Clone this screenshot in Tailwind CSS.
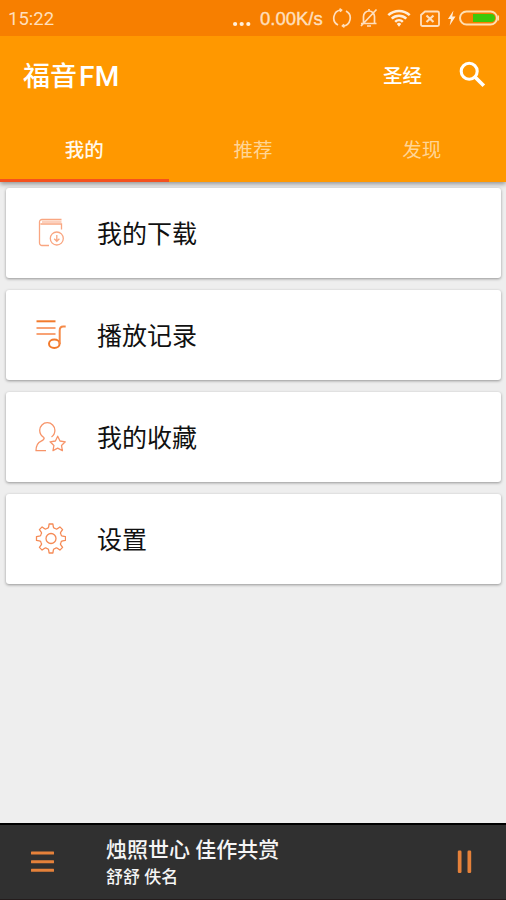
<!DOCTYPE html>
<html lang="zh-CN">
<head>
<meta charset="utf-8">
<title>福音FM</title>
<script src="https://cdn.jsdelivr.net/npm/@tailwindcss/browser@4"></script>
</head>
<body class="w-[506px] h-[900px] overflow-hidden bg-[#eeeeee] font-[Roboto,'Noto_Sans_CJK_SC',sans-serif] flex flex-col">
<header class="shrink-0 h-[182px] bg-[#ff9800] shadow-[0_2px_5px_rgba(0,0,0,0.4)] flex flex-col">
  <div class="h-9 shrink-0 bg-[#f77f00] flex items-center pl-2 pr-1.5 text-[#ffdfbd]">
    <span class="text-[18.5px] leading-9 pt-[2px]">15:22</span>
    <svg class="ml-auto mt-3 w-[18px] h-[6px]" viewBox="0 0 18 6" fill="#fff0dc"><circle cx="2.1" cy="3" r="2.1"/><circle cx="8.700" cy="3" r="2.1"/><circle cx="15.300" cy="3" r="2.1"/></svg>
    <span class="ml-[9px] w-[64px] whitespace-nowrap font-['Liberation_Sans',sans-serif] text-[18.5px] leading-9 pt-[2px] [-webkit-text-stroke:0.4px_#ffdfbd]">0.00K/s</span>
    <svg class="ml-2 w-5 h-5" viewBox="0 0 20 20" fill="none" stroke="currentColor" stroke-width="1.7"><path d="M9 2A8 8 0 0 0 6 17M11 18A8 8 0 0 0 14 3"/><path d="M7.500 0.700l2 1.400-1.500 1.700M12.500 19.300l-2-1.400 1.500-1.700"/></svg>
    <svg class="ml-[7px] w-5 h-5" viewBox="0 0 20 20" fill="none" stroke="currentColor" stroke-width="1.700"><path d="M2 15.500h15.500M4.500 15V8.500a5.500 5.500 0 0 1 11 0V15M8 18h4M10 1v2M2 18L17.500 1.500"/></svg>
    <svg class="ml-[8px] w-6 h-5" viewBox="0 0 24 20" fill="none" stroke="#ffeeda" stroke-width="2.500"><path d="M1.300 7.200a15.500 15.500 0 0 1 21.400 0M4.700 10.600a10.500 10.500 0 0 1 14.600 0M8.200 13.800a5.500 5.500 0 0 1 7.600 0"/><path d="M12 18.800l-2.200-2.800a3 3 0 0 1 4.400 0z" fill="#ffeeda" stroke="none"/></svg>
    <svg class="ml-[9px] mt-0.5 w-[22px] h-[18px]" viewBox="0 0 22 18" fill="none" stroke="currentColor" stroke-width="1.800"><path d="M5 1.500h12.500a1.500 1.500 0 0 1 1.500 1.500v11.500a1.500 1.500 0 0 1-1.500 1.500h-15a1.500 1.500 0 0 1-1.500-1.500V5z"/><path d="M6.500 5.500l7 6.500M13.500 5.500l-7 6.500" stroke-width="2.200"/></svg>
    <svg class="ml-[4px] mr-px w-[12px] h-4" viewBox="0 0 12 16" fill="#ffeeda"><path d="M7.500 0.500L2 9h3L3.700 15.500 9.500 6.500H6.200z"/></svg>
    <svg class="w-[41px] h-4" viewBox="0 0 41 16"><rect x="1" y="1.500" width="37" height="13" rx="6.500" fill="none" stroke="#ffdfb0" stroke-width="2"/><path d="M14 4H32a4 4 0 0 1 0 8H14z" fill="#3cc80a"/><path d="M39.300 5.500v5" stroke="#ffdfb0" stroke-width="1.500"/></svg>
  </div>
  <div class="h-20 shrink-0 flex items-center pl-[23px] pr-5 text-white">
    <h1 class="text-[27px] leading-10 font-medium pt-[2px]">福音<span class="text-[28px] tracking-[0.4px] ml-[2px]">FM</span></h1>
    <span class="ml-auto text-[19.500px] font-medium pt-[2px]">圣经</span>
    <svg class="ml-[37px] -mt-1 w-[27px] h-[27px]" viewBox="0 0 27 27" fill="none" stroke="white"><circle cx="10.200" cy="10.200" r="8" stroke-width="3.100"/><path d="M16 16l8.800 8.800" stroke-width="3.700"/></svg>
  </div>
  <nav class="h-[66px] shrink-0 grid grid-cols-3 text-center text-[19.500px] leading-[63px] text-[#ffd595]">
    <span class="h-[66px] pt-[3px] text-[#fff8ec] font-medium border-b-[3px] border-[#f4511e]">我的</span>
    <span class="pt-[3px]">推荐</span>
    <span class="pt-[3px]">发现</span>
  </nav>
</header>
<main class="grow flex flex-col gap-3 pt-[6px] pl-[6px] pr-[5px]">
  <section class="h-[90px] bg-white rounded-[3px] shadow-[0_1px_3px_rgba(0,0,0,0.38)] flex items-center pl-[28px]">
    <svg class="w-8 h-8" viewBox="0 0 32 32" fill="none" stroke="#f9a681" stroke-width="1.300"><path d="M27.500 2.500H8A2.500 2.500 0 0 0 5.500 5V26a2.500 2.500 0 0 0 2.500 2.500h7M6.500 7H27.500V12.500"/><path d="M8 4.800h19.500" stroke="#fcd0bd" stroke-width="2.500"/><circle cx="22.800" cy="21.500" r="6.500"/><path d="M22.800 18v6M20.200 21.700l2.600 2.600 2.600-2.600"/></svg>
    <span class="ml-[31px] pt-1 text-[25px] leading-8 text-[#111]">我的下载</span>
  </section>
  <section class="h-[90px] bg-white rounded-[3px] shadow-[0_1px_3px_rgba(0,0,0,0.38)] flex items-center pl-[28px]">
    <svg class="w-8 h-8" viewBox="0 0 32 32" fill="none" stroke="#f27a2c" stroke-width="2"><path d="M2.500 2.300h19"/><path d="M2.500 9h19M2.500 15h19" stroke="#f8a274"/><ellipse cx="20.300" cy="24.800" rx="5.300" ry="4.300"/><path d="M25.700 25V11.500c0-2.600 1.300-4 3.500-4h2.500" stroke="#f58a48"/></svg>
    <span class="ml-[31px] pt-1 text-[25px] leading-8 text-[#111]">播放记录</span>
  </section>
  <section class="h-[90px] bg-white rounded-[3px] shadow-[0_1px_3px_rgba(0,0,0,0.38)] flex items-center pl-[28px]">
    <svg class="w-8 h-8" viewBox="0 0 32 32" fill="none" stroke="#f79469" stroke-width="1.300" stroke-linejoin="round"><path d="M10.200 16.800C7.200 15 5.700 12.500 5.700 9.300a7.600 7.600 0 0 1 15.200 0c0 3.200-1.200 5.200-3.400 6.700M10.200 16.800c0 2-1 2.500-3 3.300C4 21.500 2 23.500 2 29.700h10"/><path d="M23.700 15.200l2.300 4.800 5.300.8-3.800 3.700.9 5.100-4.700-2.400-4.700 2.400.9-5.100-3.800-3.700 5.300-.8z"/></svg>
    <span class="ml-[31px] pt-1 text-[25px] leading-8 text-[#111]">我的收藏</span>
  </section>
  <section class="h-[90px] bg-white rounded-[3px] shadow-[0_1px_3px_rgba(0,0,0,0.38)] flex items-center pl-[28px]">
    <svg class="w-8 h-8" viewBox="-17 -15.500 32 32" fill="none" stroke="#f58a55" stroke-width="1.300">
      <defs><path id="tooth" d="M-4.250 -10.250Q-2.600 -9.800 -2.300 -11.800L-1.900 -14.500H1.900L2.300 -11.800Q2.600 -9.800 4.250 -10.250" stroke-linejoin="round"/></defs>
      <use href="#tooth"/><use href="#tooth" transform="rotate(45)"/><use href="#tooth" transform="rotate(90)"/><use href="#tooth" transform="rotate(135)"/><use href="#tooth" transform="rotate(180)"/><use href="#tooth" transform="rotate(225)"/><use href="#tooth" transform="rotate(270)"/><use href="#tooth" transform="rotate(315)"/>
      <circle r="5"/>
    </svg>
    <span class="ml-[31px] pt-1 text-[25px] leading-8 text-[#111]">设置</span>
  </section>
</main>
<footer class="shrink-0 h-[77px] bg-[#303030] border-t-2 border-t-black border-b border-b-[#241c1c] flex items-center pl-[31px] pr-[33px]">
  <svg class="w-[23px] h-[22px]" viewBox="0 0 23 22" fill="#e5813a"><rect y="0.500" width="23" height="3" rx="0.500"/><rect y="9.200" width="23" height="3" rx="0.500"/><rect y="17.800" width="23" height="3" rx="0.500"/></svg>
  <div class="ml-[52px] pt-[2px] text-[#f5f5f5] font-medium">
    <p class="text-[21px] leading-[28px] whitespace-nowrap">烛照世心 佳作共赏</p>
    <p class="text-[17px] leading-[26px]">舒舒 佚名</p>
  </div>
  <svg class="ml-auto w-4 h-6" viewBox="0 0 16 24" fill="#e5813a"><rect x="0.800" y="0.500" width="3.700" height="22.500" rx="1.200"/><rect x="10.500" y="0.500" width="3.700" height="22.500" rx="1.200"/></svg>
</footer>
</body>
</html>
